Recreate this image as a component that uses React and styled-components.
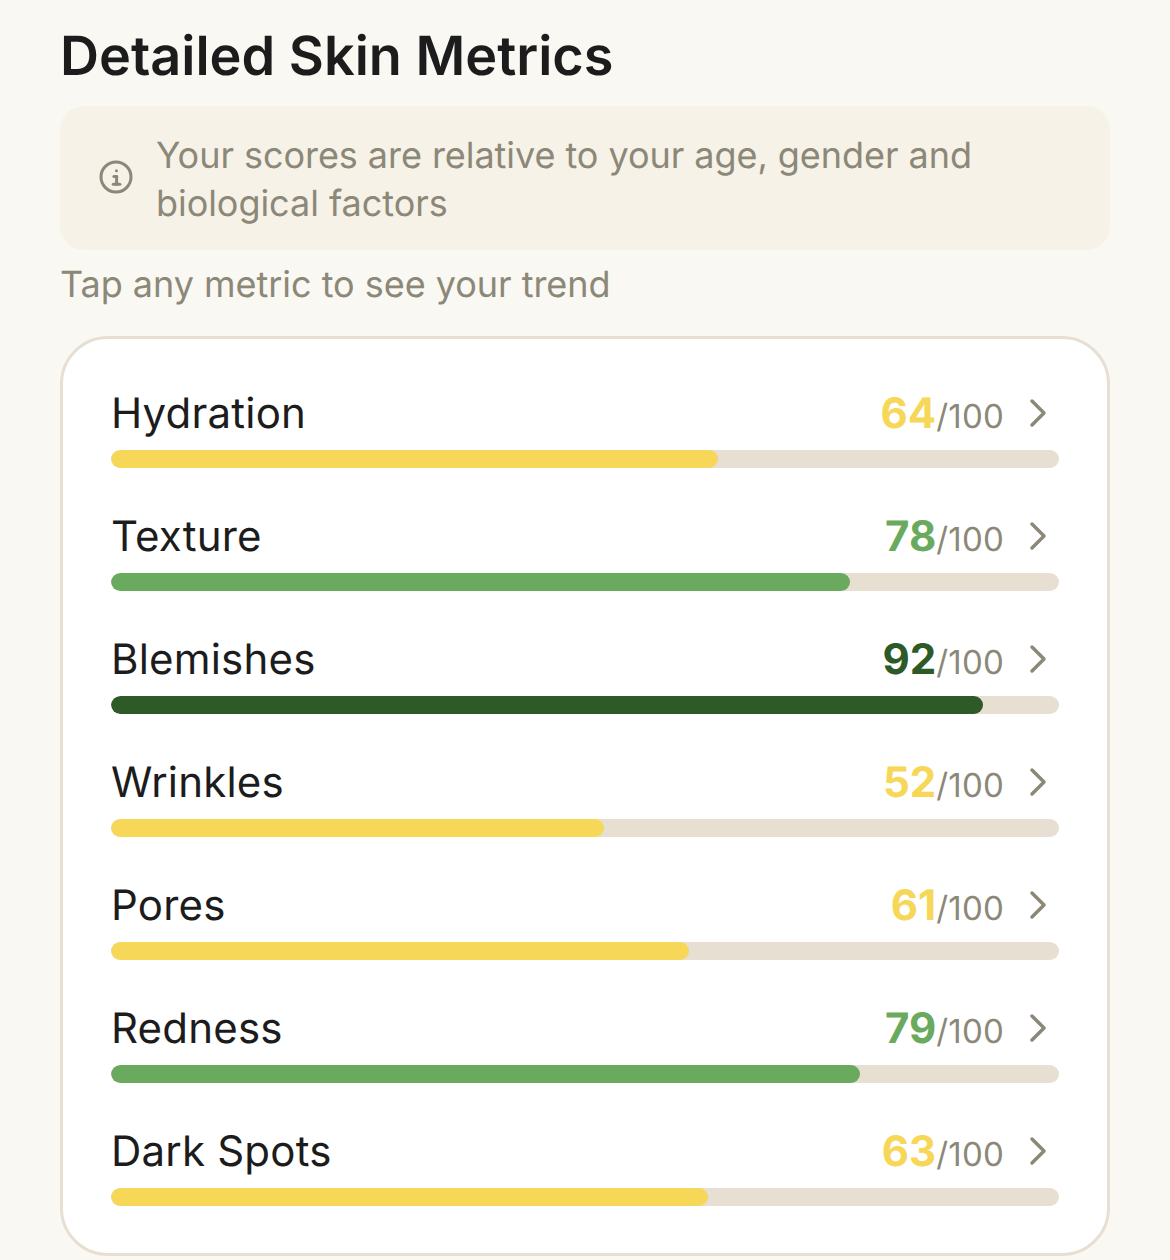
import React from "react";
import styled, { createGlobalStyle } from "styled-components";

const Global = createGlobalStyle`
  html, body { margin: 0; padding: 0; background: #faf8f3; }
  body { font-family: Inter, "Noto Sans", sans-serif; text-rendering: geometricPrecision; }
`;
const Page = styled.div`
  width: 1170px; height: 1260px; box-sizing: border-box; overflow: hidden;
  padding: 26px 60px 0; background: #faf8f3;
`;
const Title = styled.h1`
  margin: 0 0 18px; font-size: 54px; line-height: 62px; font-weight: 600; color: #1c1c1c;
`;
const Notice = styled.div`
  display: flex; align-items: center; gap: 22px; padding: 24px 38px; height: 144px; box-sizing: border-box;
  background: #f6f2e8; border-radius: 24px;
`;
const NoticeText = styled.p`
  margin: 2px 0 0; font-size: 36px; line-height: 48px; color: #8c8878; letter-spacing: -0.05px;
`;
const Hint = styled.p`
  margin: 10px 0 28px; font-size: 36px; line-height: 48px; color: #8c8878; letter-spacing: -0.03px;
`;
const Card = styled.div`
  background: #fff; border: 3px solid #e8dfd3; border-radius: 48px; padding: 46px 48px 0;
  height: 920px; box-sizing: border-box;
`;
const Row = styled.div`
  height: 123px;
`;
const Head = styled.div`
  display: flex; align-items: center; justify-content: space-between; height: 56px;
`;
const Name = styled.span`
  font-size: 42px; line-height: 56px; padding-top: 2px; color: #1c1c1c; letter-spacing: 0.2px;
`;
const Right = styled.div`
  display: flex; align-items: center; gap: 10px; margin-right: -3px;
`;
const ScoreBox = styled.span`
  font-size: 33px; color: #8c8878; line-height: 56px; padding-top: 4px; letter-spacing: 0.2px;
`;
const Score = styled.b`
  font-size: 42px; font-weight: 700; letter-spacing: 0; color: ${p => p.$c};
`;
const Track = styled.div`
  height: 18px; margin-top: 9px; border-radius: 9px; background: #e8dfd3; overflow: hidden;
`;
const Fill = styled.div`
  height: 100%; border-radius: 9px; background: ${p => p.$c};
`;
const InfoIcon = styled.svg`
  flex-shrink: 0; margin-bottom: 2px;
`;
const Y = "#f6d757", G = "#6aaa5e", D = "#2d5a27";
const data = [
  ["Hydration", 64, Y], ["Texture", 78, G], ["Blemishes", 92, D], ["Wrinkles", 52, Y],
  ["Pores", 61, Y], ["Redness", 79, G], ["Dark Spots", 63, Y],
];
const Info = () => (
  <InfoIcon width="36" height="36" viewBox="0 0 24 24" fill="none" stroke="#8c8878" strokeWidth="2" strokeLinecap="round" strokeLinejoin="round">
    <circle cx="12" cy="12" r="10" /><path d="M12.4 16.8v-5.2" /><path d="M10.6 11.6h1.8" /><path d="M10.2 16.8h4.4" /><path d="M12.3 7.9h.01" />
  </InfoIcon>
);
const Chevron = () => (
  <svg width="48" height="48" viewBox="0 0 24 24" fill="none" stroke="#8c8878" strokeWidth="1.75" strokeLinecap="round" strokeLinejoin="round">
    <path d="m9 18 6-6-6-6" />
  </svg>
);
export default function App() {
  return (
    <Page>
      <Global />
      <Title>Detailed Skin Metrics</Title>
      <Notice><Info /><NoticeText>Your scores are relative to your age, gender and biological factors</NoticeText></Notice>
      <Hint>Tap any metric to see your trend</Hint>
      <Card>
        {data.map(([n, v, c]) => (
          <Row key={n}>
            <Head>
              <Name>{n}</Name>
              <Right>
                <ScoreBox><Score $c={c}>{v}</Score>/100</ScoreBox>
                <Chevron />
              </Right>
            </Head>
            <Track><Fill $c={c} style={{ width: `${v}%` }} /></Track>
          </Row>
        ))}
      </Card>
    </Page>
  );
}
